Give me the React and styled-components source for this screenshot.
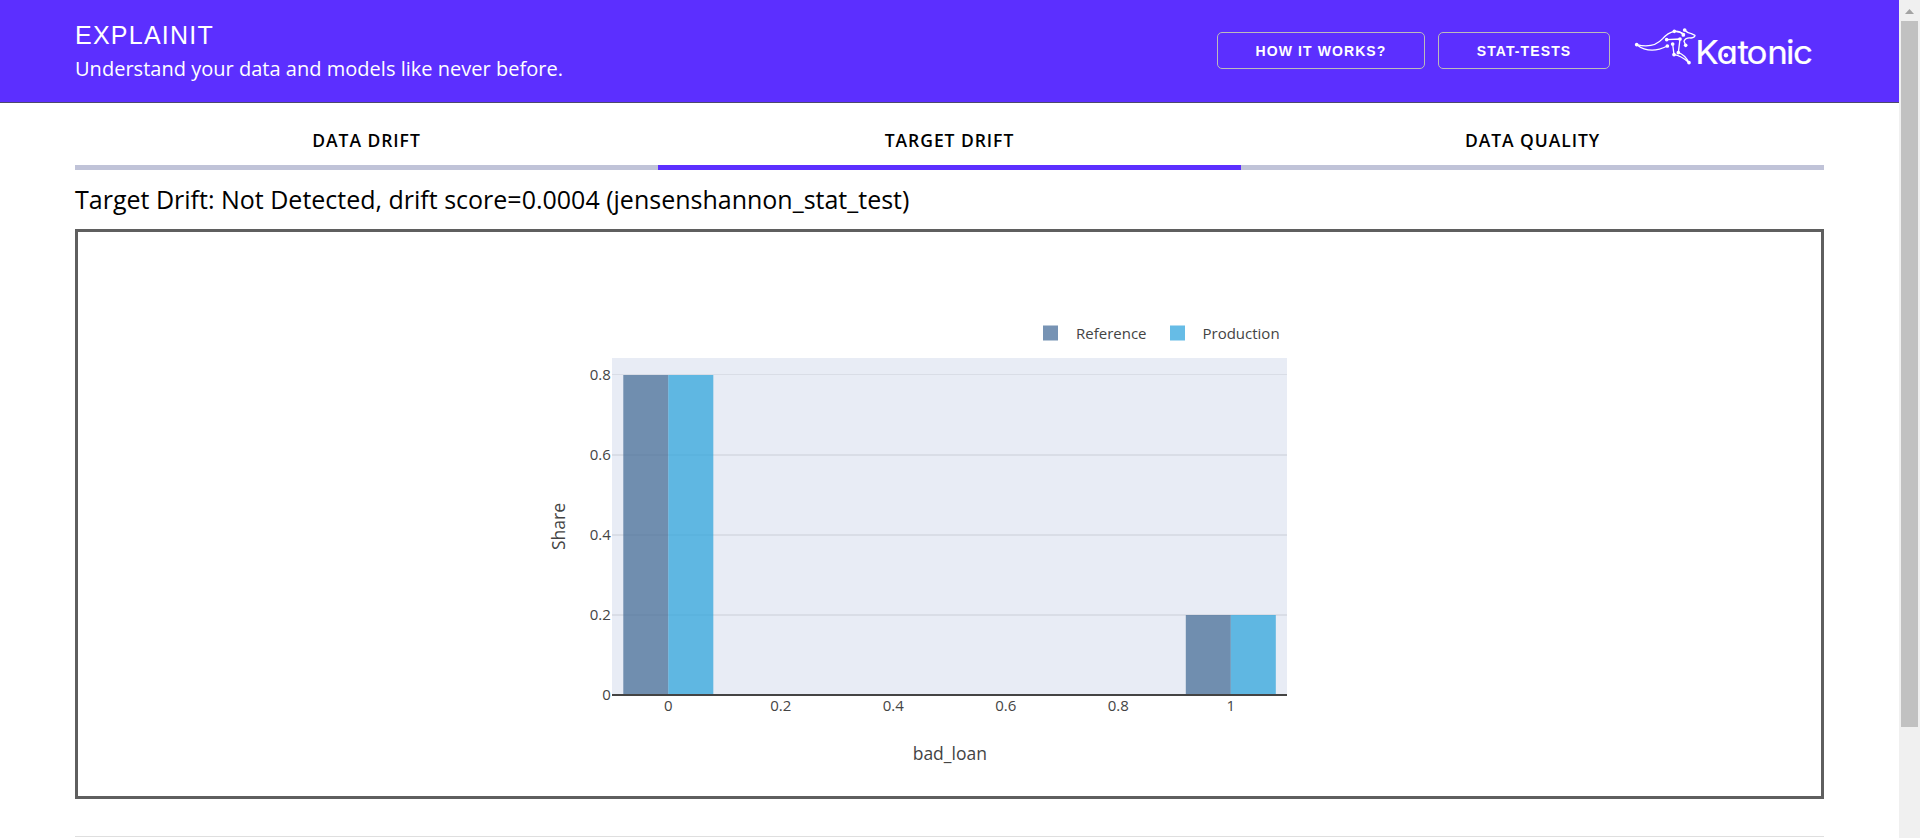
import React from "react";
import styled, { createGlobalStyle } from "styled-components";

const Global = createGlobalStyle`
  *, *::before, *::after { box-sizing: border-box; }
  body { margin: 0; background: #fff; overflow: hidden; font-family: "Open Sans", sans-serif; }
`;

const Window = styled.div`
  display: flex;
  height: 838px;
  overflow: hidden;
`;

const Page = styled.div`
  width: 1899px;
  flex: none;
`;

const Header = styled.header`
  height: 103px;
  padding: 0 77px 0 75px;
  display: flex;
  justify-content: space-between;
  align-items: flex-start;
  background: #5c2fff;
  border-bottom: 1px solid #4d4a6b;
  color: #fff;
`;

const Brand = styled.div`
  padding-top: 18px;
`;

const Title = styled.h1`
  margin: 0;
  font-family: "Liberation Sans", sans-serif;
  font-size: 25px;
  line-height: 34px;
  font-weight: 400;
  letter-spacing: 1.25px;
`;

const Tagline = styled.p`
  margin: 0;
  font-size: 20px;
  line-height: 33px;
  letter-spacing: 0.02px;
`;

const Actions = styled.div`
  display: flex;
  padding-top: 24px;
`;

const Button = styled.button`
  width: ${(p) => p.$width}px;
  height: 37px;
  margin: 8px 13px 0 0;
  padding: 0;
  background: transparent;
  border: 1px solid #bbb;
  border-radius: 5px;
  color: #fff;
  font: 700 14px "Liberation Sans", sans-serif;
  letter-spacing: 1.1px;
`;

const LogoArt = styled.svg`
  width: 190px;
  height: 54px;
  margin-left: 9px;
  overflow: visible;
`;

const Wordmark = styled.text`
  font: 400 33px Inter, sans-serif;
  font-feature-settings: "cv11";
  fill: #fff;
  stroke: #fff;
  stroke-width: 0.2px;
`;

const Tabs = styled.nav`
  display: flex;
  margin: 17px 75px 0;
`;

const Tab = styled.div`
  flex: 1;
  height: 50px;
  border-bottom: 5px solid ${(p) => (p.$active ? "#5c2fff" : "#c0c3d8")};
  font-size: 17.5px;
  font-weight: 600;
  line-height: 41px;
  letter-spacing: 0.95px;
  text-align: center;
  color: #000;
`;

const Summary = styled.h2`
  height: 59px;
  margin: 0 75px;
  font-size: 25px;
  font-weight: 400;
  line-height: 59px;
  color: #000;
`;

const Panel = styled.section`
  height: 570px;
  margin: 0 75px;
  border: 3px solid #5f5f5f;
  display: flex;
  justify-content: center;
`;

const Plot = styled.svg`
  width: 875px;
  height: 564px;
  font-family: "Open Sans", sans-serif;
`;

const TickLabel = styled.text`
  font-size: 15px;
  fill: #444;
`;

const AxisTitle = styled.text`
  font-size: 17.5px;
  fill: #444;
  text-anchor: middle;
`;

const Divider = styled.hr`
  height: 1px;
  margin: 37px 75px 0;
  border: 0;
  background: #dfdfdf;
`;

const Scrollbar = styled.div`
  width: 21px;
  padding: 9px 2px 0;
  background: #f0f0f0;
  display: flex;
  flex-direction: column;
  align-items: center;
`;

const Arrow = styled.svg`
  width: 9px;
  height: 5px;
  flex: none;
  margin-bottom: 7px;
`;

const Thumb = styled.div`
  width: 17px;
  height: 706px;
  background: #c1c1c1;
`;

const JOINTS = [
  [50, 134], [163, 94], [194, 90], [190, 105], [140, 119], [180, 117],
  [142, 138], [158, 132], [197, 136], [162, 164], [175, 158], [207, 188],
];

const WORD_STRETCH = 1.06;
const LETTER_X = [63.2, 84.4, 105.4, 114.6, 135.3, 154, 160.9]
  .map((x) => (x / WORD_STRETCH).toFixed(2))
  .join(" ");

function Logo() {
  return (
    <LogoArt viewBox="0 0 190 54" aria-label="Katonic">
      <g transform="translate(-12 -24) scale(.33333)" fill="none" stroke="#fff" strokeWidth="4" strokeLinecap="round" strokeLinejoin="round">
        <path d="M50 134C85 143 110 136 128 116Q143 98 163 94Q180 92 190 105" />
        <path d="M50 134Q90 165 142 138" />
        <path d="M163 94Q180 94 194 102M194 90Q200 98 214 101L225 106Q225 113 213 114Q196 112 192 124L197 136" />
        <path d="M140 119L180 117L175 158Q194 164 207 188" />
        <path d="M158 132L162 164Q182 166 207 188" />
        {JOINTS.map(([x, y]) => (
          <circle key={`${x}-${y}`} cx={x} cy={y} r="5.5" fill="#fff" stroke="none" />
        ))}
      </g>
      <g transform={`scale(${WORD_STRETCH} 1)`}>
        <Wordmark x={LETTER_X} y="40">Katonic</Wordmark>
      </g>
      <circle cx="94" cy="31.3" r="2.2" fill="#fff" />
    </LogoArt>
  );
}

const BASE = 463;
const yAt = (v) => BASE - v * 400;
const xAt = (v) => 156.3 + v * 562.5;
const BARS = [
  { x: 0, share: 0.8 },
  { x: 1, share: 0.2 },
];

function Chart() {
  return (
    <Plot viewBox="0 0 875 564">
      <g>
        <rect x="531" y="93.5" width="15" height="15" fill="#7793b4" />
        <TickLabel x="564" y="107">Reference</TickLabel>
        <rect x="658" y="93.5" width="15" height="15" fill="#66bce6" />
        <TickLabel x="690.5" y="107">Production</TickLabel>
      </g>
      <rect x="100" y="126" width="675" height="337" fill="#e8ecf5" />
      {[0.2, 0.4, 0.6, 0.8].map((v) => (
        <rect key={v} x="100" y={yAt(v) - 1} width="675" height={v === 0.8 ? 1 : 2} fill="#d9dde6" />
      ))}
      {BARS.map(({ x, share }) => (
        <g key={x}>
          <rect x={xAt(x) - 45} y={yAt(share)} width="45" height={BASE - yAt(share)} fill="#4a7099" fillOpacity=".76" />
          <rect x={xAt(x)} y={yAt(share)} width="45" height={BASE - yAt(share)} fill="#33a5dc" fillOpacity=".76" />
        </g>
      ))}
      <rect x="100" y="462" width="675" height="2" fill="#444" />
      {[0, 0.2, 0.4, 0.6, 0.8].map((v) => (
        <TickLabel key={v} x="98.8" y={yAt(v) + 5.3} textAnchor="end">{v}</TickLabel>
      ))}
      {[0, 0.2, 0.4, 0.6, 0.8, 1].map((v) => (
        <TickLabel key={v} x={xAt(v)} y="479" textAnchor="middle">{v}</TickLabel>
      ))}
      <AxisTitle x="437.8" y="528">bad_loan</AxisTitle>
      <AxisTitle transform="translate(52.8 294.5) rotate(-90)">Share</AxisTitle>
    </Plot>
  );
}

export default function App() {
  return (
    <Window>
      <Global />
      <Page>
        <Header>
          <Brand>
            <Title>EXPLAINIT</Title>
            <Tagline>Understand your data and models like never before.</Tagline>
          </Brand>
          <Actions>
            <Button $width={208}>HOW IT WORKS?</Button>
            <Button $width={172}>STAT-TESTS</Button>
            <Logo />
          </Actions>
        </Header>
        <Tabs>
          <Tab>DATA DRIFT</Tab>
          <Tab $active>TARGET DRIFT</Tab>
          <Tab>DATA QUALITY</Tab>
        </Tabs>
        <Summary>Target Drift: Not Detected, drift score=0.0004 (jensenshannon_stat_test)</Summary>
        <Panel>
          <Chart />
        </Panel>
        <Divider />
      </Page>
      <Scrollbar>
        <Arrow viewBox="0 0 9 5"><path d="M0 5L4.5 0L9 5Z" fill="#a3a3a3" /></Arrow>
        <Thumb />
      </Scrollbar>
    </Window>
  );
}
